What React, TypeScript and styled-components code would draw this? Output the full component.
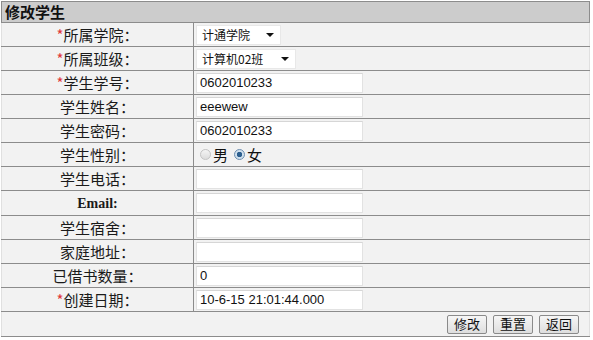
import React from "react";
import styled, { createGlobalStyle } from "styled-components";

const Global = createGlobalStyle`
  html, body { margin: 0; padding: 0; background: #ffffff; }
  body { font-family: "Noto Sans CJK SC", "Liberation Sans", sans-serif; }
`;

const Table = styled.table`
  border-collapse: collapse;
  width: 589px;
  margin: 1px 0 0 1px;
  background: #f2f2f2;
  font-family: "Noto Sans CJK SC", "Liberation Sans", sans-serif;
`;

const HeadCell = styled.th`
  height: 20px;
  padding: 0 0 0 3px;
  text-align: left;
  background: #cccccc;
  border: 1px solid #8c8c8c;
  font-size: 15px;
  font-weight: bold;
  color: #111;
  line-height: 20px;
`;

const Row = styled.tr`
  height: 24px;
`;

const LabelCell = styled.td`
  width: 191px;
  padding: 0;
  text-align: center;
  border: 1px solid #8c8c8c;
  border-left-color: #e0e0e0;
  font-size: 15px;
  color: #1a1a1a;
  line-height: 22px;
`;

const EnLabel = styled.span`
  font-family: "Liberation Serif", serif;
  font-weight: bold;
  font-size: 14px;
`;

const Star = styled.span`
  color: #e0383a;
`;

const FieldCell = styled.td`
  padding: 0 0 0 2px;
  border: 1px solid #8c8c8c;
  border-right-color: #e0e0e0;
  vertical-align: middle;
`;

const Input = styled.input`
  box-sizing: border-box;
  display: block;
  width: 167px;
  height: 20px;
  margin: 0;
  padding: 0 3px;
  border: 1px solid #e2e2e2;
  border-top-color: #d6d6d6;
  background: #fff;
  font-family: "Liberation Sans", "Noto Sans CJK SC", sans-serif;
  font-size: 13px;
  color: #111;
  outline: none;
`;

const SelectBox = styled.div<{ w: number }>`
  box-sizing: border-box;
  width: ${(p) => p.w}px;
  height: 20px;
  display: flex;
  align-items: center;
  justify-content: space-between;
  padding: 0 6px 0 5px;
  background: #fff;
  border: 1px solid #e8e8e8;
  font-family: "Noto Sans CJK SC", "Liberation Sans", sans-serif;
  font-size: 12px;
  color: #111;
`;

const Caret = styled.span`
  width: 0;
  height: 0;
  border-left: 4px solid transparent;
  border-right: 4px solid transparent;
  border-top: 4px solid #111;
`;

const RadioGroup = styled.div`
  display: flex;
  align-items: center;
  padding-left: 4px;
  font-size: 15px;
  color: #111;
`;

const Radio = styled.span<{ checked?: boolean }>`
  box-sizing: border-box;
  width: 11px;
  height: 11px;
  border-radius: 50%;
  border: 1px solid ${(p) => (p.checked ? "#6f8fb0" : "#c4c4c4")};
  background: ${(p) =>
    p.checked
      ? "radial-gradient(circle, #2c5f8f 0 2.5px, #cfe0ee 3px)"
      : "linear-gradient(#f4f4f4, #dcdcdc)"};
  margin-right: 2px;
`;

const RadioText = styled.span`
  margin-right: 6px;
`;

const ButtonCell = styled.td`
  height: 24px;
  padding: 0 10px 0 0;
  border: 1px solid #8c8c8c;
  border-left-color: #e0e0e0;
  border-right-color: #e0e0e0;
`;

const ButtonBar = styled.div`
  display: flex;
  justify-content: flex-end;
  gap: 6px;
`;

const Button = styled.button`
  box-sizing: border-box;
  height: 19px;
  padding: 0 6px;
  margin: 0;
  background: linear-gradient(#f6f6f6, #dedede);
  border: 1px solid #8a8a8a;
  border-radius: 2px;
  font-family: "Noto Sans CJK SC", sans-serif;
  font-size: 13px;
  line-height: 16px;
  color: #111;
`;

type Field =
  | { label: string; req?: boolean; en?: boolean; kind: "input"; value: string }
  | { label: string; req?: boolean; kind: "select"; value: string; w: number }
  | { label: string; kind: "radio" };

const fields: Field[] = [
  { label: "所属学院：", req: true, kind: "select", value: "计通学院", w: 85 },
  { label: "所属班级：", req: true, kind: "select", value: "计算机02班", w: 100 },
  { label: "学生学号：", req: true, kind: "input", value: "0602010233" },
  { label: "学生姓名：", kind: "input", value: "eeewew" },
  { label: "学生密码：", kind: "input", value: "0602010233" },
  { label: "学生性别：", kind: "radio" },
  { label: "学生电话：", kind: "input", value: "" },
  { label: "Email：", en: true, kind: "input", value: "" },
  { label: "学生宿舍：", kind: "input", value: "" },
  { label: "家庭地址：", kind: "input", value: "" },
  { label: "已借书数量：", kind: "input", value: "0" },
  { label: "创建日期：", req: true, kind: "input", value: "10-6-15 21:01:44.000" },
];

export default function App() {
  return (
    <>
      <Global />
      <Table>
        <thead>
          <tr>
            <HeadCell colSpan={2}>修改学生</HeadCell>
          </tr>
        </thead>
        <tbody>
          {fields.map((f) => (
            <Row key={f.label}>
              <LabelCell>
                {"req" in f && f.req && <Star>*</Star>}
                {"en" in f && f.en ? <EnLabel>Email:</EnLabel> : f.label}
              </LabelCell>
              <FieldCell>
                {f.kind === "input" && <Input defaultValue={f.value} />}
                {f.kind === "select" && (
                  <SelectBox w={f.w}>
                    {f.value}
                    <Caret />
                  </SelectBox>
                )}
                {f.kind === "radio" && (
                  <RadioGroup>
                    <Radio />
                    <RadioText>男</RadioText>
                    <Radio checked />
                    <RadioText>女</RadioText>
                  </RadioGroup>
                )}
              </FieldCell>
            </Row>
          ))}
          <tr>
            <ButtonCell colSpan={2}>
              <ButtonBar>
                <Button>修改</Button>
                <Button>重置</Button>
                <Button>返回</Button>
              </ButtonBar>
            </ButtonCell>
          </tr>
        </tbody>
      </Table>
    </>
  );
}
